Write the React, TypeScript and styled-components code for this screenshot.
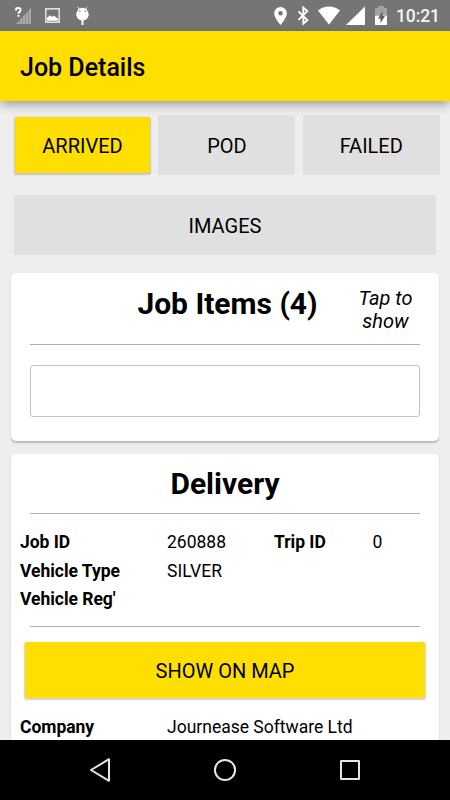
import React from "react";
import styled, { createGlobalStyle } from "styled-components";

const GlobalStyle = createGlobalStyle`
  * { box-sizing: border-box; }
  body { margin: 0; background: #eeeeee; }
  button { font: inherit; color: inherit; border: 0; padding: 0; }
  h1, h2, p { margin: 0; }
`;

const Screen = styled.div`
  width: 450px;
  height: 800px;
  display: flex;
  flex-direction: column;
  overflow: hidden;
  background: #eeeeee;
  color: #000;
  font-family: Roboto, sans-serif;
`;

const StatusBar = styled.div`
  flex: none;
  height: 31px;
  background: #757575;
`;

const StatusContent = styled.div`
  display: flex;
  justify-content: space-between;
  height: 31px;
`;

const Clock = styled.span`
  width: 59px;
  padding: 1px 0 0 5px;
  color: #f5f5f5;
  font-size: 17.5px;
  font-weight: 500;
  line-height: 31px;
  letter-spacing: -0.1px;
`;

const AppBar = styled.header`
  position: relative;
  z-index: 1;
  flex: none;
  height: 70px;
  padding: 2px 20px 0;
  background: #ffdf00;
  box-shadow: 0 4px 10px -1px rgba(0, 0, 0, 0.38);
`;

const Title = styled.h1`
  font-size: 25px;
  font-weight: 500;
  line-height: 70px;
`;

const Content = styled.main`
  flex: 1;
  min-height: 0;
  overflow: hidden;
  padding: 14px 11px 0;
`;

const ButtonRow = styled.div`
  display: grid;
  grid-template-columns: 137px 137px 137px;
  column-gap: 7.4px;
  margin-left: 3px;
  height: 60px;
`;

const Button = styled.button<{ $primary?: boolean }>`
  height: ${(p) => (p.$primary ? "56px" : "60px")};
  margin: ${(p) => (p.$primary ? "1.5px 1px 0" : "0")};
  padding-top: ${(p) => (p.$primary ? "2px" : "1px")};
  background: ${(p) => (p.$primary ? "#ffdf00" : "#e0e0e0")};
  border-radius: 2px;
  box-shadow: ${(p) => (p.$primary ? "0 1px 1.5px 0.5px rgba(0, 0, 0, 0.18)" : "none")};
  font-size: 20px;
  line-height: 24px;
`;

const ImagesButton = styled(Button)`
  display: block;
  width: 422px;
  margin: 20px 0 17.5px 3px;
`;

const Card = styled.section`
  margin-bottom: 13px;
  background: #fff;
  border-radius: 5px;
  box-shadow: 0 1.5px 1.5px rgba(0, 0, 0, 0.22);
`;

const ItemsCard = styled(Card)`
  height: 168px;
`;

const DeliveryCard = styled(Card)`
  height: 340px;
`;

const ItemsHeader = styled.div`
  display: grid;
  grid-template-columns: 95px 243px 73px;
  height: 71.5px;
  padding-top: 13px;
`;

const Heading = styled.h2`
  font-size: 30px;
  font-weight: 700;
  line-height: 36px;
  text-align: center;
`;

const ItemsHeading = styled(Heading)`
  grid-column: 2;
`;

const Hint = styled.p`
  padding-top: 1.4px;
  font-size: 20px;
  font-style: italic;
  line-height: 23.5px;
  text-align: center;
`;

const Divider = styled.hr`
  height: 1px;
  border: 0;
  margin: 0 19px;
  background: #b0b0b0;
`;

const ItemInput = styled.input`
  display: block;
  width: 390px;
  height: 52px;
  margin: 20px 19px 0;
  border: 1px solid #c2c2c2;
  border-radius: 3px;
  background: #fff;
`;

const DeliveryHeading = styled(Heading)`
  height: 59.5px;
  padding-top: 12px;
`;

const Details = styled.dl`
  display: grid;
  grid-template-columns: 147px 107px 98.5px 1fr;
  grid-auto-rows: 28.6px;
  margin: 0;
  padding: 14px 0 12.2px 9px;
  font-size: 17.5px;
  line-height: 29px;
`;

const Term = styled.dt`
  grid-column: 1;
  font-weight: 700;
  letter-spacing: -0.03px;
`;

const TripTerm = styled(Term)`
  grid-column: 3;
`;

const Value = styled.dd`
  margin: 0;
`;

const MapButton = styled(Button)`
  display: block;
  width: 400px;
  margin: 15px 14px 0;
`;

const CompanyDetails = styled(Details)`
  grid-template-columns: 147px 1fr;
  padding-top: 15px;
`;

const NavBar = styled.nav`
  flex: none;
  height: 60px;
  background: #000;
`;

function StatusIcons() {
  return (
    <svg width="391" height="31" viewBox="0 0 391 31" fill="#fff">
      <path d="M16 24 31 8V24Z" fill="#a8a8a8" />
      <path d="M19.5 20v4M22.5 17v7M25.5 14v10M28.5 11v13" stroke="#8b8b8b" strokeWidth=".8" />
      <path d="M15.9 10.4q0-2.4 2.4-2.4t2.2 2.1c0 1.6-2 1.7-2 3.7M18.5 15v1.8" fill="none" stroke="#fff" strokeWidth="2" />
      <rect x="45.8" y="8.8" width="13.4" height="13.4" fill="none" stroke="#e5e5e5" strokeWidth="1.5" />
      <path d="M47 20.8v-3l3-2.6 2 1.6 2-1 4 3v2Z" />
      <path d="M76.3 13.5h12.4c0 4-2.6 6.9-6.2 6.9s-6.2-2.9-6.2-6.9Z" />
      <path d="M76.5 14.5a6 6 0 0 0 12 0c0-2-1-4-2.3-5.2l1.3-2-.5-.4-1.5 1.8a6 6 0 0 0-6 0L78 6.7l-.6.4 1.2 2.2a7 7 0 0 0-2.1 5.2Z" />
      <path d="M82.5 20v5" stroke="#fff" strokeWidth="2" />
      <circle cx="79.8" cy="11.2" r=".8" fill="#757575" />
      <circle cx="85.2" cy="11.2" r=".8" fill="#757575" />
      <path fillRule="evenodd" d="M280.5 7a6.3 6.3 0 0 0-6.3 6.3c0 4.8 6.3 11.7 6.3 11.7s6.3-6.9 6.3-11.7A6.3 6.3 0 0 0 280.5 7Zm0 4a2.3 2.3 0 1 1 0 4.6 2.3 2.3 0 0 1 0-4.6Z" />
      <path d="m298.5 11.3 8.8 8.8-4 3.5V7.6l4 3.5-8.8 8.8" fill="none" stroke="#fff" strokeWidth="1.9" />
      <path d="M318 10.5a17.5 17.5 0 0 1 22 0L329 24.5Z" />
      <path d="M346 25h19V6.5Z" />
      <path d="M378 6v2h-3v7h12V8h-3V6Z" fill="#a2a2a2" />
      <path d="M375 15.5h12V25h-12Z" />
      <path d="M382.5 11.5 378 18.5h2.5V23l4.5-7h-2.5Z" fill="#5f5f5f" />
    </svg>
  );
}

function NavIcons() {
  return (
    <svg width="450" height="60" viewBox="0 0 450 60" fill="none" stroke="#e6e6e6" strokeWidth="2" strokeLinejoin="round">
      <path d="M109 19.2v21.6L91 30Z" />
      <circle cx="225" cy="30" r="10.1" />
      <rect x="341" y="21" width="18" height="18" />
    </svg>
  );
}

export default function App() {
  return (
    <Screen>
      <GlobalStyle />
      <StatusBar>
        <StatusContent>
          <StatusIcons />
          <Clock>10:21</Clock>
        </StatusContent>
      </StatusBar>
      <AppBar>
        <Title>Job Details</Title>
      </AppBar>
      <Content>
        <ButtonRow>
          <Button $primary>ARRIVED</Button>
          <Button>POD</Button>
          <Button>FAILED</Button>
        </ButtonRow>
        <ImagesButton>IMAGES</ImagesButton>
        <ItemsCard>
          <ItemsHeader>
            <ItemsHeading>Job Items (4)</ItemsHeading>
            <Hint>Tap to show</Hint>
          </ItemsHeader>
          <Divider />
          <ItemInput aria-label="Job item" />
        </ItemsCard>
        <DeliveryCard>
          <DeliveryHeading>Delivery</DeliveryHeading>
          <Divider />
          <Details>
            <Term>Job ID</Term>
            <Value>260888</Value>
            <TripTerm>Trip ID</TripTerm>
            <Value>0</Value>
            <Term>Vehicle Type</Term>
            <Value>SILVER</Value>
            <Term>Vehicle Reg'</Term>
          </Details>
          <Divider />
          <MapButton $primary>SHOW ON MAP</MapButton>
          <CompanyDetails>
            <Term>Company</Term>
            <Value>Journease Software Ltd</Value>
          </CompanyDetails>
        </DeliveryCard>
      </Content>
      <NavBar>
        <NavIcons />
      </NavBar>
    </Screen>
  );
}
